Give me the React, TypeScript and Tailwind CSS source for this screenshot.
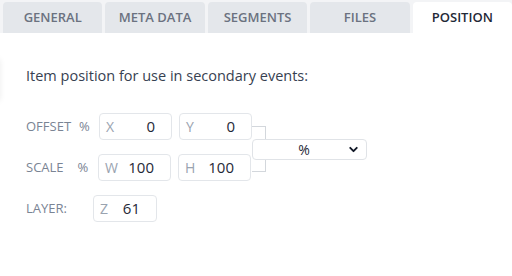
import { ChevronDown } from 'lucide-react';

const tabs = ['GENERAL', 'META DATA', 'SEGMENTS', 'FILES', 'POSITION'];

function Field({ prefix, value, width = 'w-[73px]' }: { prefix: string; value: string; width?: string }) {
  return (
    <div
      className={`flex h-[27px] ${width} items-center rounded-[4px] border border-[#e3e6ea] bg-white pl-[6px] pr-[16px]`}
    >
      <span className="text-[14px] text-[#9aa3b0]">{prefix}</span>
      <span className="flex-1 text-right text-[15px] text-[#1f2937]">{value}</span>
    </div>
  );
}

export default function App() {
  const active = 'POSITION';

  return (
    <div className="relative h-[276px] w-[512px] overflow-hidden bg-white font-['Open_Sans',sans-serif]">
      {/* tab strip */}
      <div className="flex h-[33px] gap-[3px] bg-[#f3f4f6] pl-[3px] pt-[2px]">
        {tabs.map((t) => (
          <div
            key={t}
            className={`flex flex-1 items-center justify-center rounded-t-[4px] text-[13px] font-semibold ${
              t === active ? 'bg-white text-[#1f2937]' : 'bg-[#e4e7eb] text-[#6b7280]'
            }`}
          >
            {t}
          </div>
        ))}
      </div>

      <div className="pointer-events-none absolute left-[-10px] top-[58px] h-[44px] w-[10px] rounded-md shadow-[0_0_6px_rgba(0,0,0,0.08)]" />

      <div className="pl-[26px] pt-[33px]">
        <p className="text-[14.5px] leading-[20px] text-[#374151]">Item position for use in secondary events:</p>

        <div className="mt-[27px] flex items-start">
          <div className="flex flex-col gap-[14px]">
            <div className="flex items-center">
              <div className="flex w-[73px] items-center text-[13px] text-[#7a8494]">
                <span>OFFSET</span>
                <span className="ml-[8px]">%</span>
              </div>
              <div className="flex gap-[7px]">
                <Field prefix="X" value="0" />
                <Field prefix="Y" value="0" />
              </div>
            </div>
            <div className="flex items-center">
              <div className="flex w-[72px] items-center text-[13px] text-[#7a8494]">
                <span>SCALE</span>
                <span className="ml-[14px]">%</span>
              </div>
              <div className="flex gap-[7px]">
                <Field prefix="W" value="100" />
                <Field prefix="H" value="100" />
              </div>
            </div>
          </div>

          <div className="flex flex-col pt-[13px]">
            <div className="h-[13px] w-[14px] border-r border-t border-[#d3d7dc]" />
            <div className="flex h-[21px] w-[115px] items-center rounded-[4px] border border-[#e0e3e7] bg-white pl-[8px] pr-[6px]">
              <span className="flex-1 text-center text-[14px] text-[#1f2937]">%</span>
              <ChevronDown size={13} strokeWidth={3.5} className="text-[#111827]" />
            </div>
            <div className="h-[12px] w-[14px] border-b border-r border-[#d3d7dc]" />
          </div>
        </div>

        <div className="mt-[14px] flex items-center">
          <div className="w-[67px] text-[13px] text-[#7a8494]">LAYER:</div>
          <Field prefix="Z" value="61" width="w-[64px]" />
        </div>
      </div>
    </div>
  );
}
